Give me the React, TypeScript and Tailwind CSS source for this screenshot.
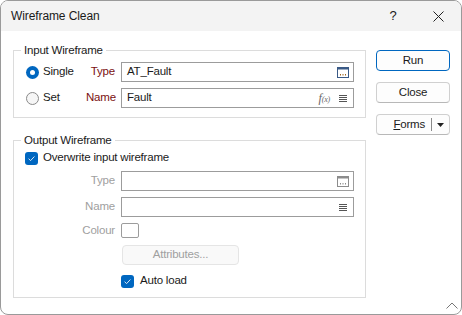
import React from "react";

const ui = "font-['Liberation_Sans',Arial,sans-serif] text-[11.5px] tracking-[-0.2px]";

function Radio({ checked }: { checked?: boolean }) {
  if (checked) {
    return (
      <span className="flex h-[13px] w-[13px] items-center justify-center rounded-full bg-[#0067c0]">
        <span className="h-[5px] w-[5px] rounded-full bg-white" />
      </span>
    );
  }
  return <span className="h-[13px] w-[13px] rounded-full border border-[#8a8a8a] bg-[#f6f6f6]" />;
}

function Check() {
  return (
    <span className="flex h-[13px] w-[13px] items-center justify-center rounded-[3px] bg-[#0067c0]">
      <svg width="9" height="9" viewBox="0 0 9 9">
        <path d="M1.6 4.7 3.6 6.6 7.4 2.5" fill="none" stroke="#dbe8f5" strokeWidth="1" />
      </svg>
    </span>
  );
}

function BrowseIcon({ disabled }: { disabled?: boolean }) {
  const frame = disabled ? "#8c8c8c" : "#3a5a86";
  const dots = disabled ? "#8c8c8c" : "#a0651c";
  return (
    <svg width="12" height="11" viewBox="0 0 12 11">
      <rect x="0.5" y="0.5" width="11" height="10" fill="white" stroke={frame} />
      <rect x="0.5" y="0.5" width="11" height="2" fill={frame} />
      <rect x="3" y="7" width="1" height="1.5" fill={dots} />
      <rect x="5.5" y="7" width="1" height="1.5" fill={dots} />
      <rect x="8" y="7" width="1" height="1.5" fill={dots} />
    </svg>
  );
}

function ListIcon() {
  return (
    <svg width="8" height="8" viewBox="0 0 8 8">
      <path d="M0 1.5h8M0 3.5h8M0 5.5h8M0 7.5h8" stroke="#555" strokeWidth="1" />
    </svg>
  );
}

function Field({ children, className = "" }: { children?: React.ReactNode; className?: string }) {
  return (
    <div className={`ml-[6px] flex h-[20px] flex-1 items-center border border-[#9c9c9c] bg-white pl-[5px] ${className}`}>
      {children}
    </div>
  );
}

function GroupBox({ title, className = "", children }: { title: string; className?: string; children: React.ReactNode }) {
  return (
    <div className={`border border-[#dcdcdc] ${className}`}>
      <div className="-mt-[8px] flex h-[14px] items-center">
        <span className="w-[7px] shrink-0" />
        <span className="bg-white px-[3px] leading-[14px]">{title}</span>
      </div>
      {children}
    </div>
  );
}

export default function App() {
  return (
    <div className={`h-[315px] w-[462px] bg-white text-[#1a1a1a] ${ui}`}>
      <div className="relative flex h-[315px] w-[462px] flex-col overflow-hidden rounded-[8px] border border-[#9a9a9a] bg-white">
        {/* title bar */}
        <div className="flex h-[30px] items-center bg-[#f3f3f3]">
          <span className="flex-1 pl-[10px] text-[12px] tracking-[-0.1px]">Wireframe Clean</span>
          <span className="w-[46px] text-center text-[13px]">?</span>
          <span className="flex w-[45px] justify-center">
            <svg width="11" height="11" viewBox="0 0 11 11">
              <path d="M0.5 0.5 10.5 10.5M10.5 0.5 0.5 10.5" stroke="#222" strokeWidth="1" />
            </svg>
          </span>
        </div>

        <div className="flex flex-1 gap-[10px] pl-[12px] pr-[11px] pt-[12px]">
          <div className="flex w-[353px] flex-col">
            {/* Input Wireframe */}
            <GroupBox title="Input Wireframe" className="mt-[7px]">
              <div className="flex flex-col gap-[6px] pb-[9px] pl-[12px] pr-[11px] pt-[5px]">
                <div className="flex h-[20px] items-center">
                  <div className="flex w-[60px] items-center gap-[4px]">
                    <Radio checked />
                    <span>Single</span>
                  </div>
                  <span className="w-[29px] text-right text-[#7a1010]">Type</span>
                  <Field className="pr-[4px]">
                    <span className="flex-1">AT_Fault</span>
                    <BrowseIcon />
                  </Field>
                </div>
                <div className="flex h-[20px] items-center">
                  <div className="flex w-[60px] items-center gap-[4px]">
                    <Radio />
                    <span>Set</span>
                  </div>
                  <span className="w-[29px] text-right text-[#7a1010]">Name</span>
                  <Field className="pr-[6px]">
                    <span className="flex-1">Fault</span>
                    <span className="font-['Liberation_Serif',serif] italic text-[#666]">
                      <span className="text-[12px]">f</span>
                      <span className="text-[8px]">(x)</span>
                    </span>
                    <span className="ml-[9px] flex">
                      <ListIcon />
                    </span>
                  </Field>
                </div>
              </div>
            </GroupBox>

            {/* Output Wireframe */}
            <GroupBox title="Output Wireframe" className="mt-[22px]">
              <div className="flex flex-col pb-[9px] pl-[11px] pr-[11px] pt-[4px]">
                <div className="flex h-[14px] items-center gap-[5px]">
                  <Check />
                  <span>Overwrite input wireframe</span>
                </div>
                <div className="mt-[6px] flex h-[20px] items-center">
                  <span className="w-[90px] text-right text-[#a0a0a0]">Type</span>
                  <Field className="pr-[4px]">
                    <span className="flex-1" />
                    <BrowseIcon disabled />
                  </Field>
                </div>
                <div className="mt-[6px] flex h-[20px] items-center">
                  <span className="w-[90px] text-right text-[#a0a0a0]">Name</span>
                  <Field className="pr-[6px]">
                    <span className="flex-1" />
                    <ListIcon />
                  </Field>
                </div>
                <div className="mt-[6px] flex h-[15px] items-center">
                  <span className="w-[90px] text-right text-[#a0a0a0]">Colour</span>
                  <span className="ml-[6px] h-[15px] w-[18px] rounded-[2px] border border-[#9c9c9c] bg-white" />
                </div>
                <div className="mt-[7px] flex h-[20px] items-center pl-[97px]">
                  <span className="flex h-[20px] w-[117px] items-center justify-center rounded-[4px] border border-[#e5e5e5] bg-[#f9f9f9] text-[#a0a0a0]">
                    Attributes...
                  </span>
                </div>
                <div className="mt-[9px] flex h-[14px] items-center gap-[6px] pl-[96px]">
                  <Check />
                  <span>Auto load</span>
                </div>
              </div>
            </GroupBox>
          </div>

          {/* buttons */}
          <div className="mt-[7px] flex w-[74px] flex-col gap-[11px]">
            <button className="flex h-[21px] items-center justify-center rounded-[4px] border border-[#0067c0] bg-[#fdfdfd]">
              Run
            </button>
            <button className="flex h-[21px] items-center justify-center rounded-[4px] border border-[#d0d0d0] border-b-[#b8b8b8] bg-[#fdfdfd]">
              Close
            </button>
            <button className="flex h-[21px] items-center rounded-[4px] border border-[#d0d0d0] border-b-[#b8b8b8] bg-[#fdfdfd]">
              <span className="flex-1 pr-[6px] text-right">
                <span className="underline">F</span>orms
              </span>
              <span className="h-[13px] w-px bg-[#8a8a8a]" />
              <span className="flex w-[17px] justify-center">
                <svg width="7" height="4" viewBox="0 0 7 4">
                  <path d="M0 0h7L3.5 4z" fill="#222" />
                </svg>
              </span>
            </button>
          </div>
        </div>

        {/* resize grip */}
        <svg className="absolute bottom-[5px] right-[3px]" width="12" height="7" viewBox="0 0 12 7">
          <path d="M0.5 6.5 6 1 11.5 6.5" fill="none" stroke="#777" strokeWidth="1" />
        </svg>
      </div>
    </div>
  );
}
